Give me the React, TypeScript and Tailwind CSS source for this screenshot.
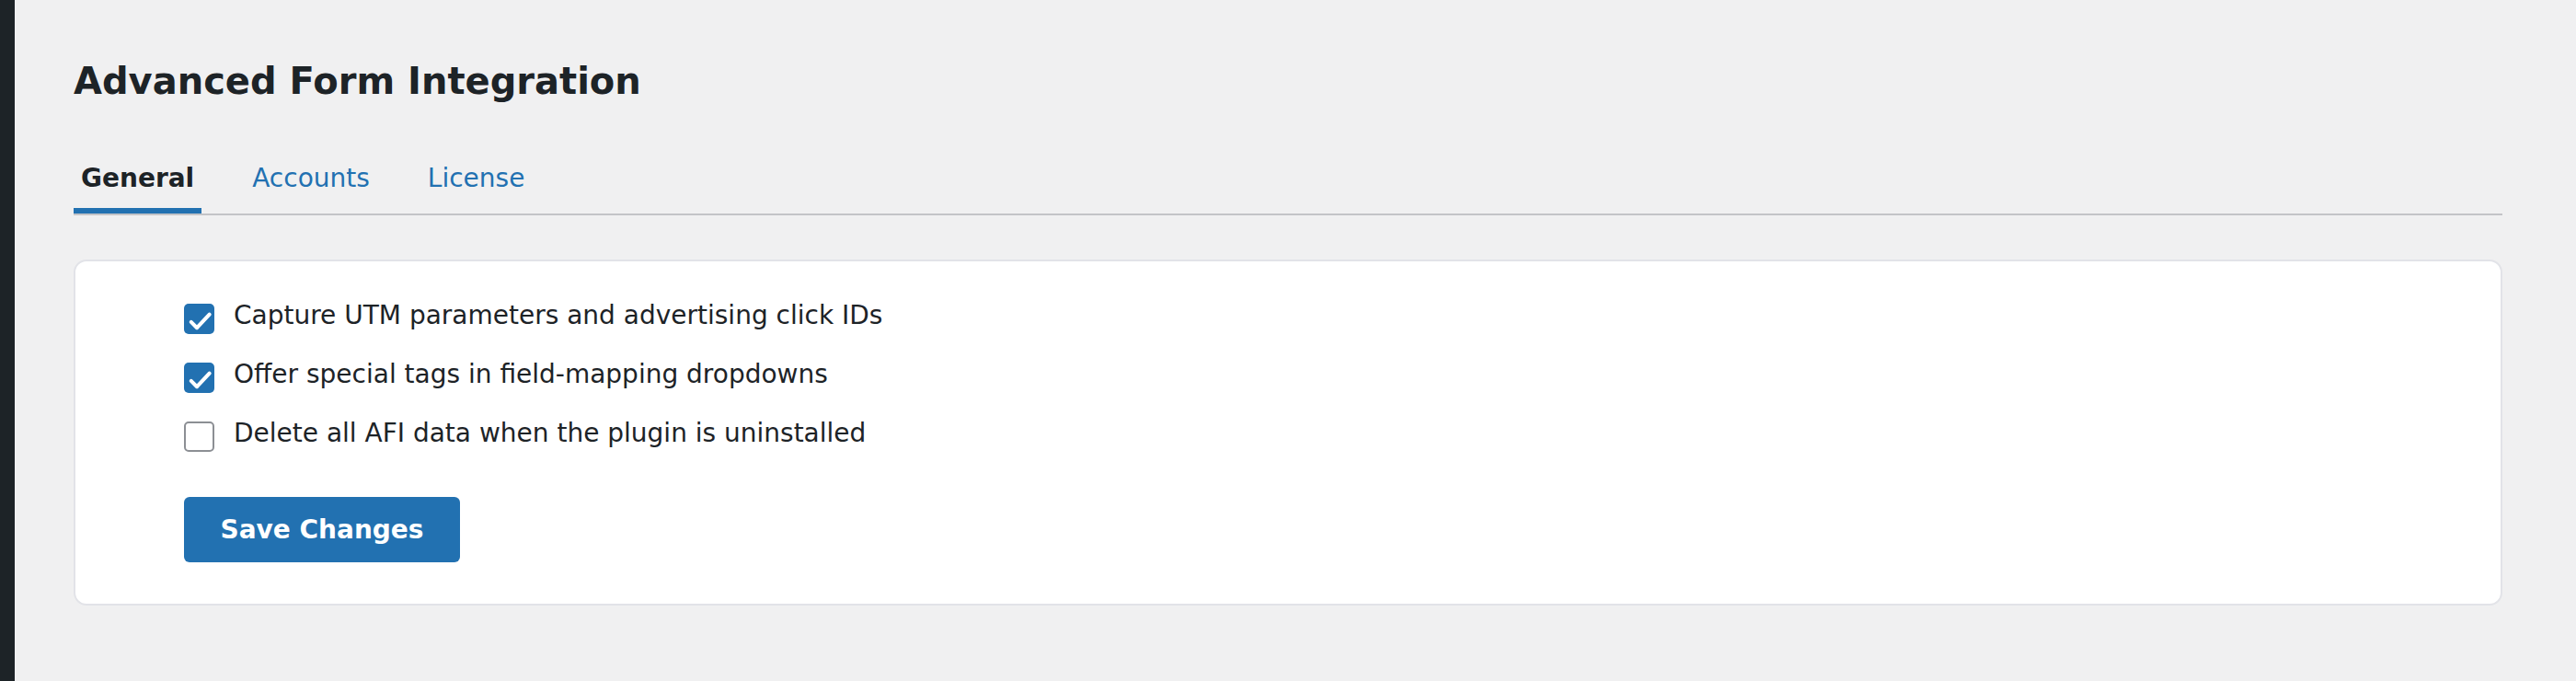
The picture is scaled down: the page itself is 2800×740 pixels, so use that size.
import React from "react";

function Check() {
  return (
    <svg width="33" height="33" viewBox="0 0 34 34" className="block">
      <polyline
        points="8,20.5 14.5,27 28.5,12"
        fill="none"
        stroke="#ffffff"
        strokeWidth="4.2"
        strokeLinecap="round"
        strokeLinejoin="round"
      />
    </svg>
  );
}

function Row({ checked, label }: { checked: boolean; label: string }) {
  return (
    <label className="flex items-start">
      {checked ? (
        <span className="w-[33px] h-[33px] rounded-[5px] bg-[#2271b1] flex-none">
          <Check />
        </span>
      ) : (
        <span className="w-[33px] h-[33px] rounded-[5px] bg-white border-2 border-[#8c8f94] flex-none" />
      )}
      <span className="ml-[21px] text-[28px] leading-[26px] text-[#1d2327]">{label}</span>
    </label>
  );
}

export default function App() {
  return (
    <div
      className="flex min-h-screen w-full bg-[#f0f0f1]"
      style={{ fontFamily: '"DejaVu Sans", "Noto Sans", sans-serif' }}
    >
      <div className="w-[16px] flex-none bg-[#1d2327]" />
      <div className="flex-1 pl-[64px] pr-[80px] pt-[64px]">
        <h1 className="text-[40px] leading-[48px] font-bold text-[#1d2327]">
          Advanced Form Integration
        </h1>
        <div className="mt-[52px] flex gap-[47px] border-b-2 border-[#c3c4c7]">
          <div className="px-[8px] pt-[14px] pb-[16px] border-b-[6px] border-[#2271b1] text-[28px] leading-[32px] font-bold text-[#1d2327]">
            General
          </div>
          <div className="px-[8px] pt-[14px] pb-[16px] border-b-[6px] border-transparent text-[28px] leading-[32px] text-[#2271b1]">
            Accounts
          </div>
          <div className="px-[8px] pt-[14px] pb-[16px] border-b-[6px] border-transparent text-[28px] leading-[32px] text-[#2271b1]">
            License
          </div>
        </div>
        <div className="mt-[48px] bg-white border-2 border-[#e2e3e8] rounded-[14px] pl-[118px] pt-[46px] pb-[45px]">
          <div className="flex flex-col gap-[31px]">
            <Row checked label="Capture UTM parameters and advertising click IDs" />
            <Row checked label="Offer special tags in field-mapping dropdowns" />
            <Row checked={false} label="Delete all AFI data when the plugin is uninstalled" />
          </div>
          <button className="mt-[49px] w-[300px] h-[71px] rounded-[6px] bg-[#2271b1] text-white text-[28px] font-bold">
            Save Changes
          </button>
        </div>
      </div>
    </div>
  );
}
